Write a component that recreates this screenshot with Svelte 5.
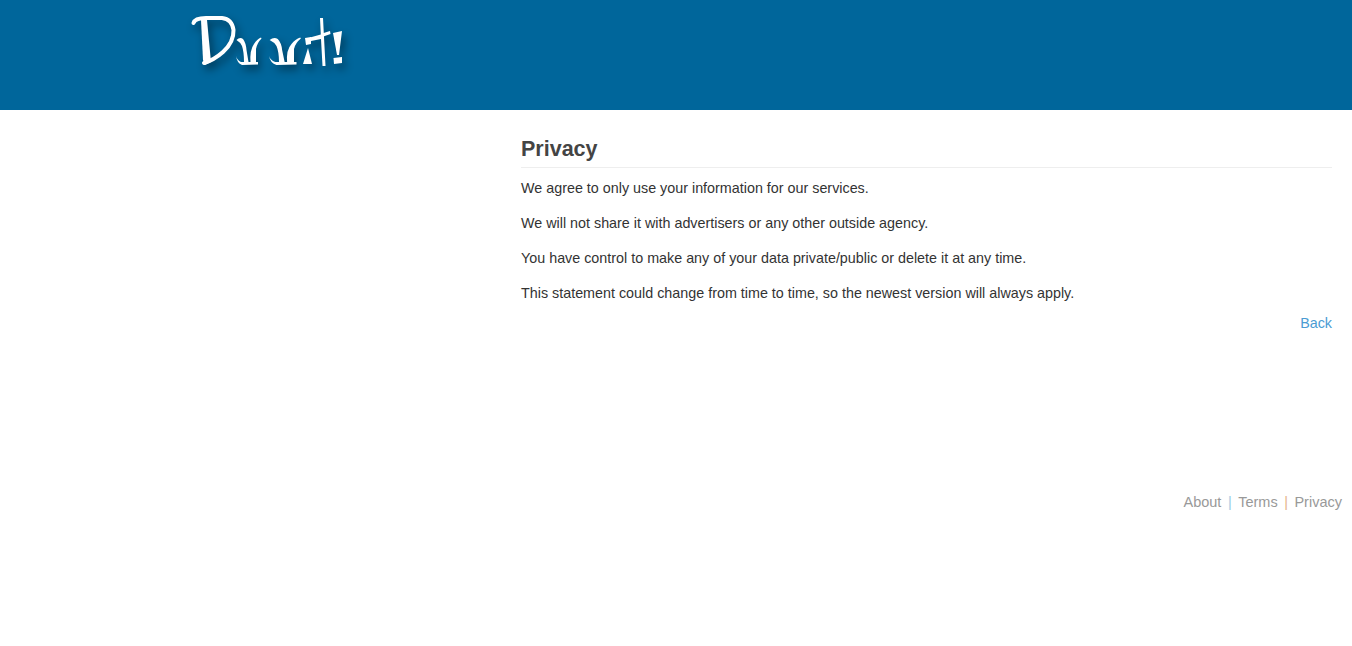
<script lang="ts">
    const paragraphs = [
        "We agree to only use your information for our services.",
        "We will not share it with advertisers or any other outside agency.",
        "You have control to make any of your data private/public or delete it at any time.",
        "This statement could change from time to time, so the newest version will always apply."
    ];
    // the two squiggle letters of the logo share one shape
    const squiggle = "M0.500 4 Q4 0.500 7 3 Q10 7 10.500 14 L12.500 26 L8 26 Q8 16 6 10 Q4 6 0.500 4 Z M0 20 Q1 24 5 26 L22 26 L22 28.500 L6 29 Q1 27 0 20 Z M14.500 27 Q13.500 14 18 8 Q21 3 25 1.500 L25.500 2.500 Q21 7 20 13 L20 27 Z";
</script>

<header class="banner">
    <svg class="logo" viewBox="185 8 170 65" role="img" aria-label="Logo">
        <g fill="#fff">
            <path class="pen" d="M193.500 23 Q195 18 206 18 L222 18 Q232 19 233.500 30 Q234 42 223 52 Q214 60 204 63"/>
            <path d="M201 20 L207 20 L211 62 L205 65 L203 60 Z"/>
            <path transform="translate(236 36)" d={squiggle}/>
            <path transform="translate(269 36) scale(1.250 1)" d={squiggle}/>
            <path d="M303 64 L308 48 L312 64 Z"/>
            <path d="M305 38 L311 37 L311 44 L306 45 Z"/>
            <path d="M320 18 L323 18 L325.500 66 L322.500 66 L321 39 L311 41 L310 37.500 L320.800 34.500 Z"/>
            <path d="M322 33.500 L330 31 L330.500 34 L322 37 Z"/>
            <path d="M333 33 L342 31 L339 55 L337 55 Z"/>
            <path d="M333.500 58 L342 57 L342 63 L334 64 Z"/>
        </g>
    </svg>
</header>

<main class="content">
    <h2>Privacy</h2>
    {#each paragraphs as text}
        <p>{text}</p>
    {/each}
    <div class="back"><a href="#back">Back</a></div>
</main>

<footer class="links">
    <a href="#about">About</a>
    <span class="blue">|</span>
    <a href="#terms">Terms</a>
    <span class="orange">|</span>
    <a href="#privacy">Privacy</a>
</footer>

<style>
    :global(body) {
        margin: 0;
        background: #fff;
        font-family: "Liberation Sans", Arial, sans-serif;
        font-size: 14.330px;
        line-height: 20px;
        color: #333;
    }

    .banner {
        height: 110px;
        background-color: #00669b;
        padding-left: 185px;
        padding-top: 8px;
        box-sizing: border-box;
    }

    .logo {
        display: block;
        width: 170px;
        height: 65px;
        overflow: visible;
        filter: drop-shadow(3px 5px 4px rgba(0, 0, 0, 0.45));
    }

    .pen {
        fill: none;
        stroke: #fff;
        stroke-width: 4;
        stroke-linecap: round;
    }

    .content {
        width: 831px;
        box-sizing: border-box;
        margin-left: auto;
        padding: 23px 20px 0 0;
    }

    h2 {
        margin: 0 0 10px;
        padding: 1px 0 3px;
        border-bottom: 1px solid #eee;
        font-size: 21.500px;
        line-height: 30px;
        font-weight: bold;
        color: #444;
    }

    p {
        margin: 0 0 15px;
    }

    p:last-of-type {
        margin-bottom: 10px;
    }

    .back {
        text-align: right;
    }

    a {
        text-decoration: none;
    }

    .back a {
        color: #4b9cd3;
    }

    .links {
        margin-top: 159px;
        padding-right: 10px;
        display: flex;
        justify-content: flex-end;
        gap: 6.500px;
        font-size: 14.500px;
        color: #999;
    }

    .links a {
        color: #999;
    }

    .blue {
        color: #9accE4;
    }

    .orange {
        color: #e5b48c;
    }
</style>
